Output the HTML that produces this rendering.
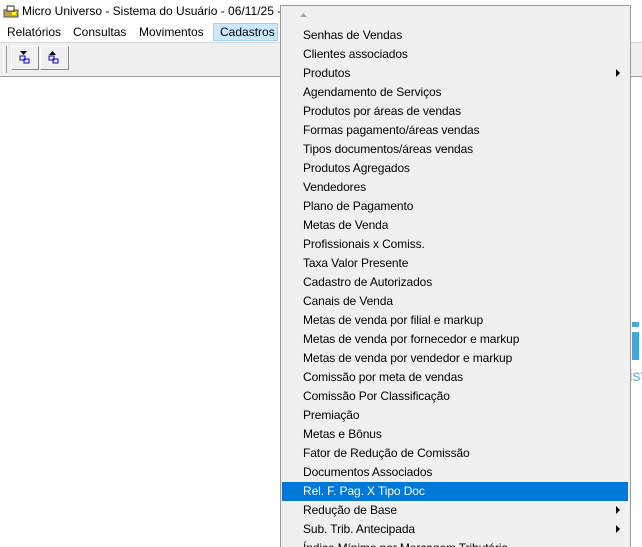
<html><head><style>
html,body{margin:0;width:642px;height:547px;overflow:hidden}
body{background:#fff;font-family:"Liberation Sans",sans-serif;font-size:12px;position:relative}
.a{position:absolute}
.mi{position:absolute;left:303px;height:19px;line-height:19px;color:#000;white-space:nowrap;letter-spacing:-0.1px}
.ar{position:absolute;left:616px;width:0;height:0;border-top:4px solid transparent;border-bottom:4px solid transparent;border-left:4px solid #000}
</style></head><body>
<div class="a" style="left:0;top:0;width:642px;height:22px;background:#fff"></div>
<svg class="a" style="left:3px;top:4px" width="16" height="15"><rect x="1" y="6" width="14" height="7" fill="#c8a040" stroke="#555"/><rect x="4" y="2" width="7" height="5" fill="#fff" stroke="#333"/><rect x="9" y="8" width="4" height="3" fill="#ff0"/></svg>
<div class="a" style="left:22px;top:4px;font-size:12px">Micro Universo - Sistema do Usuário - 06/11/25 -</div>
<div class="a" style="left:213px;top:23px;width:65px;height:18px;background:#cce8ff;border:1px solid #99d1ff;box-sizing:border-box"></div>
<div class="a" style="left:7px;top:25px">Relatórios</div>
<div class="a" style="left:73px;top:25px">Consultas</div>
<div class="a" style="left:139px;top:25px">Movimentos</div>
<div class="a" style="left:220px;top:25px">Cadastros</div>
<div class="a" style="left:0;top:42px;width:642px;height:35px;background:#f0f0f0;border-top:1px solid #d8d8d8;border-bottom:1px solid #a0a0a0;box-sizing:border-box"></div>
<div class="a" style="left:3px;top:46px;width:2px;height:27px;border-left:1px solid #fff;border-right:1px solid #a0a0a0"></div>
<div class="a" style="left:11px;top:46px;width:28px;height:24px;border:1px solid #fff;border-right-color:#888;border-bottom-color:#888;box-sizing:border-box"></div>
<div class="a" style="left:40px;top:46px;width:29px;height:24px;border:1px solid #fff;border-right-color:#888;border-bottom-color:#888;box-sizing:border-box"></div>
<svg class="a" style="left:18px;top:50px" width="14" height="16"><path d="M2 1h7l-3.5 4z" fill="#000"/><rect x="2" y="6" width="5" height="4" fill="none" stroke="#00c"/><rect x="6" y="9" width="5" height="4" fill="none" stroke="#00c"/></svg>
<svg class="a" style="left:47px;top:50px" width="14" height="16"><path d="M2 5h7l-3.5-4z" fill="#000"/><rect x="2" y="6" width="5" height="4" fill="none" stroke="#00c"/><rect x="6" y="9" width="5" height="4" fill="none" stroke="#00c"/></svg>
<div class="a" style="left:632px;top:322px;width:7px;height:5px;background:#46a6d6"></div>
<div class="a" style="left:632px;top:332px;width:7px;height:28px;background:#46a6d6"></div>
<div class="a" style="left:629px;top:368px;color:#6ab0d8;font-size:16px">ist</div>
<div class="a" style="left:280px;top:5px;width:351px;height:560px;background:#f0f0f0;border:1px solid #999;box-sizing:border-box"></div>
<svg class="a" style="left:299px;top:12px" width="10" height="6"><path d="M1 5h7l-3.5-4z" fill="#aaa"/></svg>
<div class="a" style="left:282px;top:482px;width:346px;height:19px;background:#0078d7"></div>
<div class="mi" style="top:26px">Senhas de Vendas</div>
<div class="mi" style="top:45px">Clientes associados</div>
<div class="mi" style="top:64px">Produtos</div><div class="ar" style="top:69px"></div>
<div class="mi" style="top:83px">Agendamento de Serviços</div>
<div class="mi" style="top:102px">Produtos por áreas de vendas</div>
<div class="mi" style="top:121px">Formas pagamento/áreas vendas</div>
<div class="mi" style="top:140px">Tipos documentos/áreas vendas</div>
<div class="mi" style="top:159px">Produtos Agregados</div>
<div class="mi" style="top:178px">Vendedores</div>
<div class="mi" style="top:197px">Plano de Pagamento</div>
<div class="mi" style="top:216px">Metas de Venda</div>
<div class="mi" style="top:235px">Profissionais x Comiss.</div>
<div class="mi" style="top:254px">Taxa Valor Presente</div>
<div class="mi" style="top:273px">Cadastro de Autorizados</div>
<div class="mi" style="top:292px">Canais de Venda</div>
<div class="mi" style="top:311px">Metas de venda por filial e markup</div>
<div class="mi" style="top:330px">Metas de venda por fornecedor e markup</div>
<div class="mi" style="top:349px">Metas de venda por vendedor e markup</div>
<div class="mi" style="top:368px">Comissão por meta de vendas</div>
<div class="mi" style="top:387px">Comissão Por Classificação</div>
<div class="mi" style="top:406px">Premiação</div>
<div class="mi" style="top:425px">Metas e Bônus</div>
<div class="mi" style="top:444px">Fator de Redução de Comissão</div>
<div class="mi" style="top:463px">Documentos Associados</div>
<div class="mi" style="top:482px;color:#fff">Rel. F. Pag. X Tipo Doc</div>
<div class="mi" style="top:501px">Redução de Base</div><div class="ar" style="top:506px"></div>
<div class="mi" style="top:520px">Sub. Trib. Antecipada</div><div class="ar" style="top:525px"></div>
<div class="mi" style="top:539px">Índice Mínimo por Mercagem Tributária</div>
</body></html>
